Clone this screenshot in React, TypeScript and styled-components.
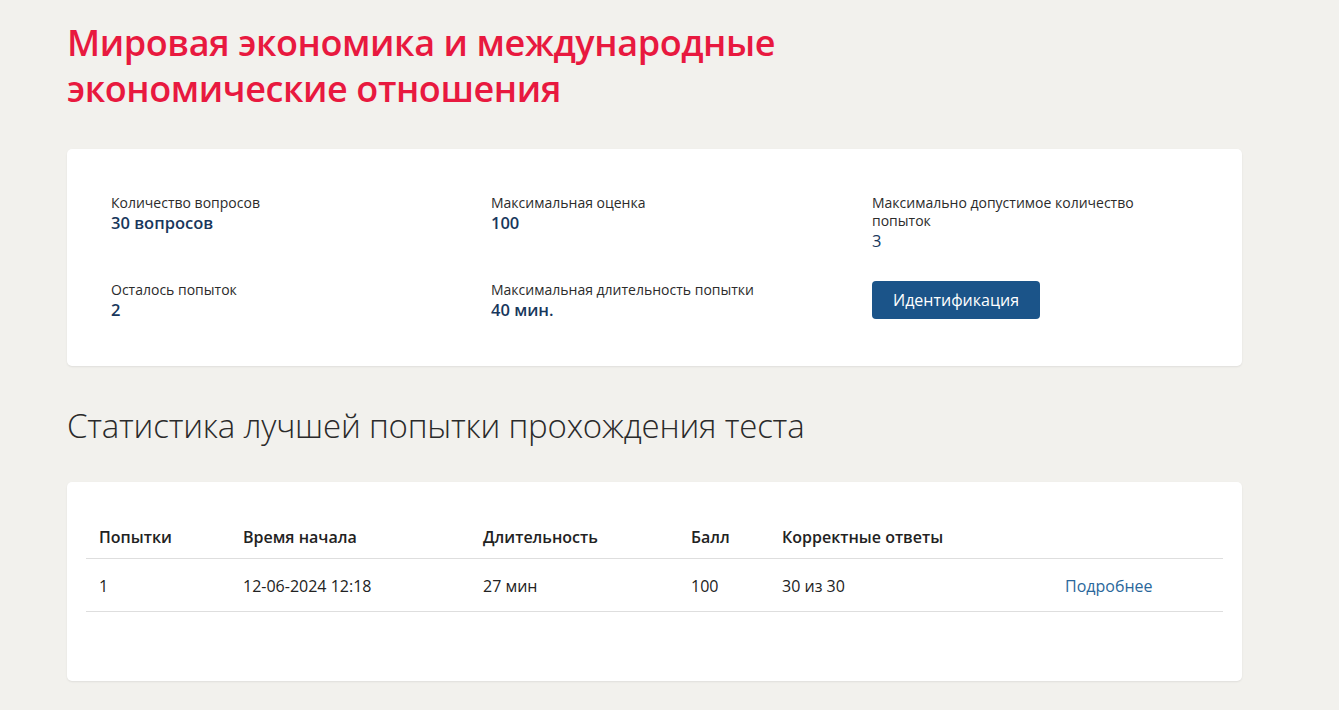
import React from "react";
import styled, { createGlobalStyle } from "styled-components";

const Global = createGlobalStyle`
  html, body { margin: 0; padding: 0; }
  body {
    background: #f2f1ed;
    font-family: "Open Sans", "Noto Sans", sans-serif;
    color: #222;
  }
`;

const Page = styled.div`
  padding: 20px 0 30px 67px;
  width: 1175px;
`;

const Title = styled.h1`
  margin: 0;
  font-family: "Open Sans", sans-serif;
  font-weight: 600;
  font-size: 36px;
  line-height: 46px;
  color: #e8193f;
  max-width: 760px;
  letter-spacing: -0.4px;
`;

const Card = styled.section<{ $pad: string; $mt: number }>`
  margin-top: ${(p) => p.$mt}px;
  background: #fff;
  border-radius: 5px;
  box-shadow: 0 1px 2px rgba(0, 0, 0, 0.08);
  padding: ${(p) => p.$pad};
`;

const InfoGrid = styled.div`
  display: grid;
  grid-template-columns: 380px 381px 1fr;
  row-gap: 30px;
`;

const InfoItem = styled.div`
  display: flex;
  flex-direction: column;
`;

const Label = styled.div`
  font-size: 14px;
  line-height: 18px;
  color: #2b2b2b;
  max-width: 300px;
`;

const Value = styled.div<{ $light?: boolean }>`
  font-size: 16.5px;
  line-height: 21px;
  font-weight: ${(p) => (p.$light ? 400 : 600)};
  color: #18375c;
`;

const Button = styled.button`
  width: 168px;
  height: 38px;
  border: none;
  border-radius: 4px;
  background: #1b5489;
  color: #fff;
  font-family: inherit;
  font-size: 16px;
  cursor: pointer;
  padding: 0;
`;

const SectionTitle = styled.h2`
  margin: 38px 0 0 0;
  font-weight: 300;
  font-size: 33px;
  line-height: 44px;
  color: #2a2a2a;
  letter-spacing: -0.2px;
`;

const Table = styled.table`
  width: 100%;
  border-collapse: collapse;
  table-layout: fixed;
  font-size: 16px;
`;

const Col = styled.col<{ $w?: number }>`
  width: ${(p) => (p.$w ? `${p.$w}px` : "auto")};
`;

const Th = styled.th`
  box-sizing: border-box;
  text-align: left;
  font-weight: 600;
  color: #222;
  padding: 0 0 10px 13px;
  height: 31px;
  border-bottom: 1px solid #dedede;
`;

const Td = styled.td`
  padding: 16px 0 14px 13px;
  color: #222;
  border-bottom: 1px solid #dedede;
  line-height: 22px;
`;

const Link = styled.a`
  color: #2a679b;
  text-decoration: none;
`;

const info = [
  { label: "Количество вопросов", value: "30 вопросов" },
  { label: "Максимальная оценка", value: "100" },
  { label: "Максимально допустимое количество попыток", value: "3", light: true },
  { label: "Осталось попыток", value: "2" },
  { label: "Максимальная длительность попытки", value: "40 мин." },
];

const columns = [
  { title: "Попытки", w: 144 },
  { title: "Время начала", w: 240 },
  { title: "Длительность", w: 208 },
  { title: "Балл", w: 91 },
  { title: "Корректные ответы", w: 283 },
  { title: "", w: 0 },
];

export default function App() {
  return (
    <>
      <Global />
      <Page>
        <Title>Мировая экономика и международные экономические отношения</Title>
        <Card $mt={37} $pad="45px 44px 46px 44px">
          <InfoGrid>
            {info.map((i) => (
              <InfoItem key={i.label}>
                <Label>{i.label}</Label>
                <Value $light={i.light}>{i.value}</Value>
              </InfoItem>
            ))}
            <InfoItem>
              <Button>Идентификация</Button>
            </InfoItem>
          </InfoGrid>
        </Card>
        <SectionTitle>Статистика лучшей попытки прохождения теста</SectionTitle>
        <Card $mt={34} $pad="44px 19px 69px 19px">
          <Table>
            <colgroup>
              {columns.map((c, idx) => (
                <Col key={idx} $w={c.w} />
              ))}
            </colgroup>
            <thead>
              <tr>
                {columns.map((c, idx) => (
                  <Th key={idx}>{c.title}</Th>
                ))}
              </tr>
            </thead>
            <tbody>
              <tr>
                <Td>1</Td>
                <Td>12-06-2024 12:18</Td>
                <Td>27 мин</Td>
                <Td>100</Td>
                <Td>30 из 30</Td>
                <Td>
                  <Link href="#">Подробнее</Link>
                </Td>
              </tr>
            </tbody>
          </Table>
        </Card>
      </Page>
    </>
  );
}
